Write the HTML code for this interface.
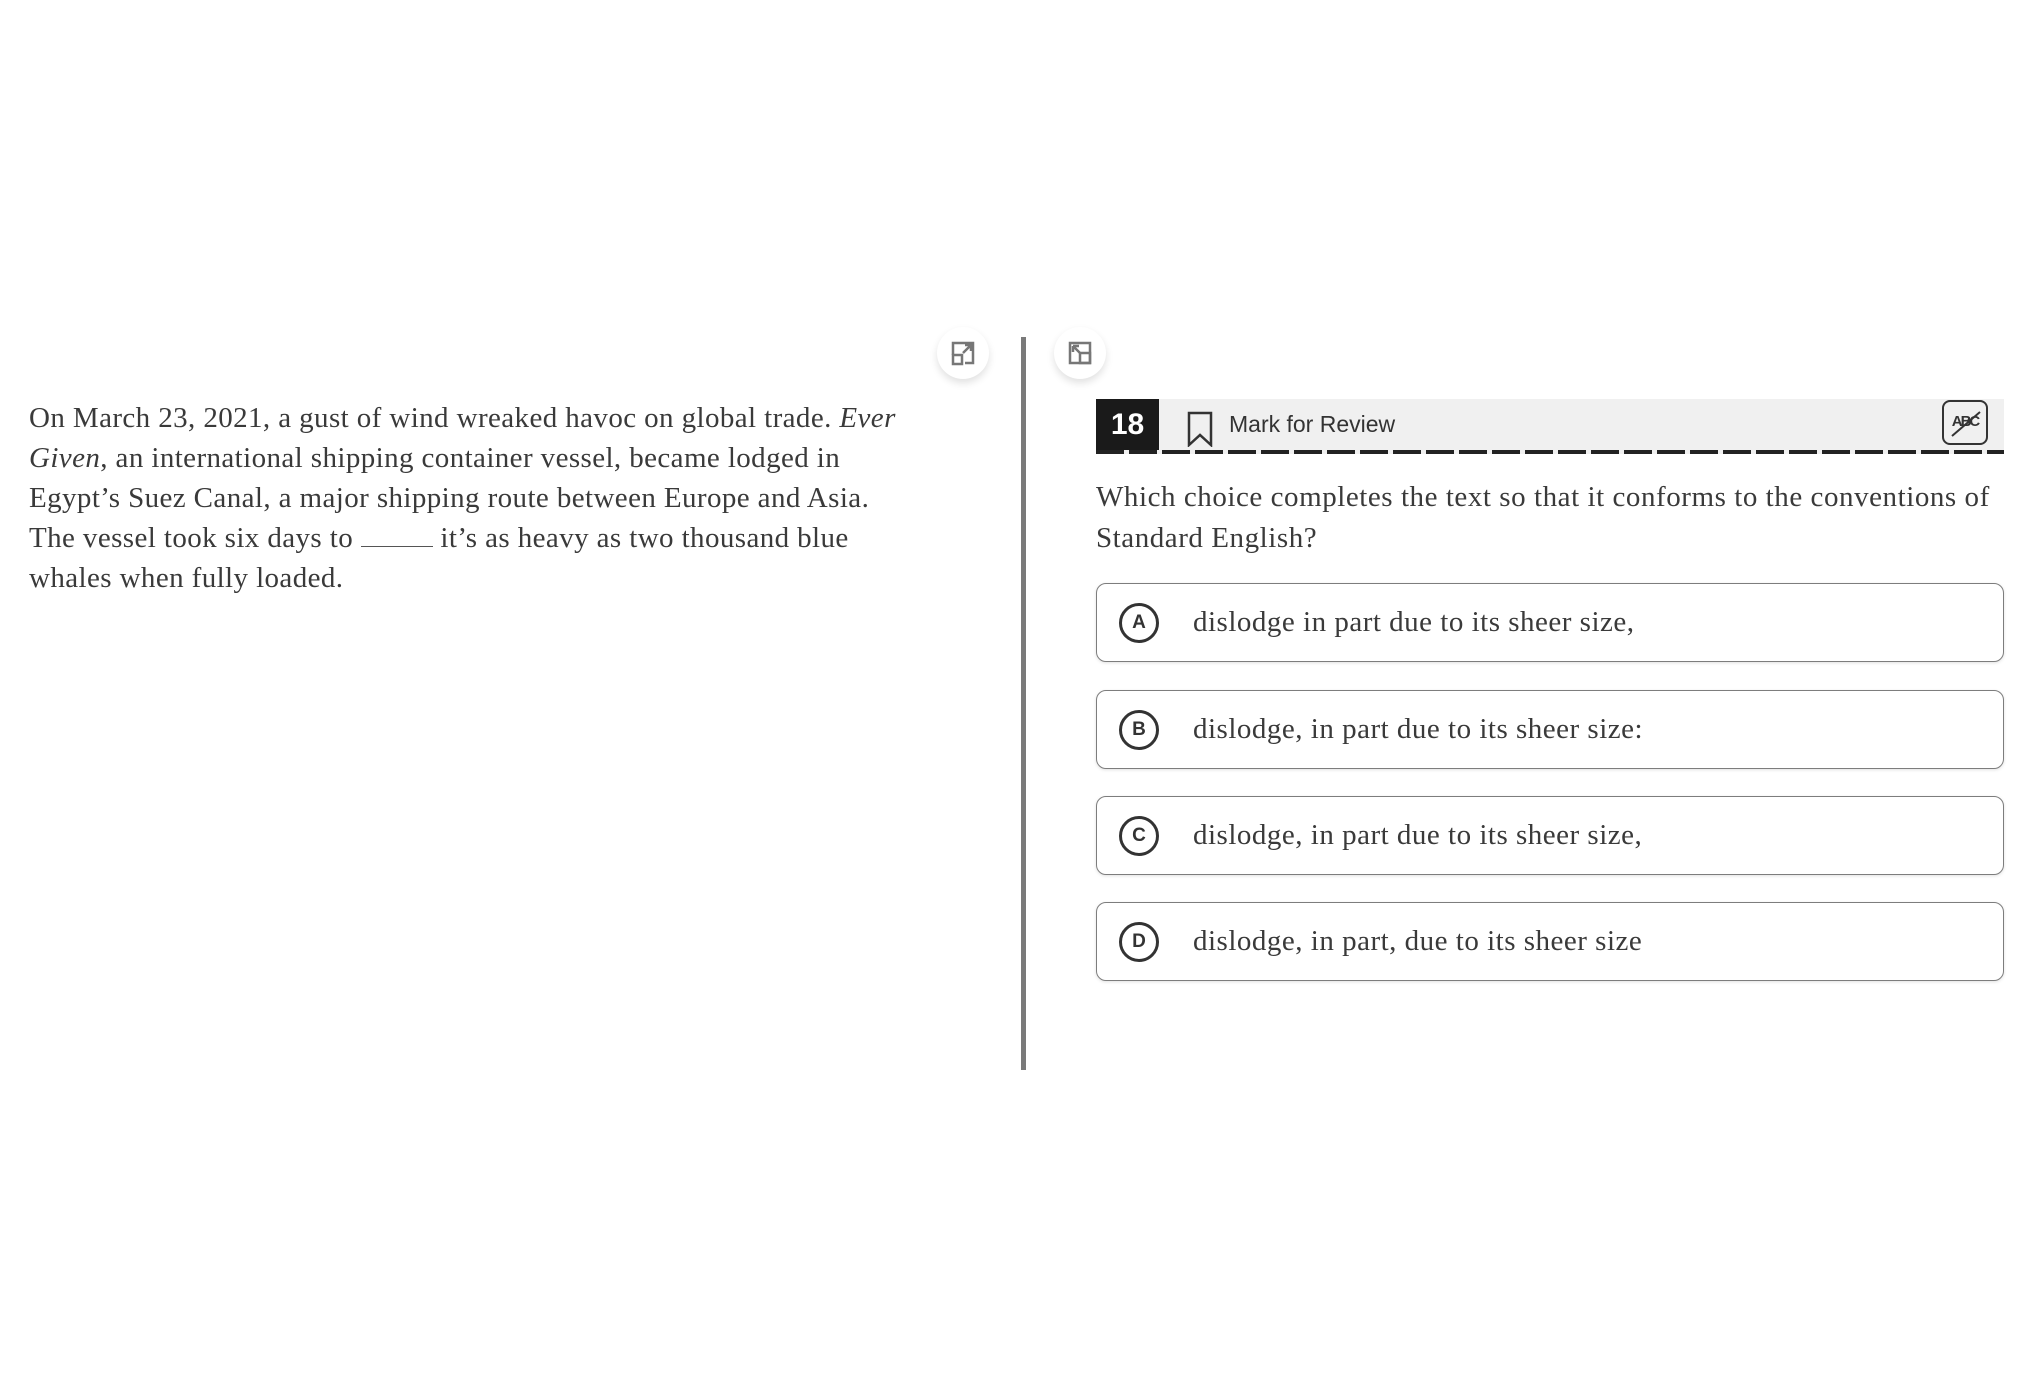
<!DOCTYPE html>
<html><head><meta charset="utf-8"><style>
*{margin:0;padding:0;box-sizing:border-box}
body{width:2040px;height:1400px;background:#fff;position:relative;overflow:hidden;font-family:"Liberation Serif",serif;color:#3a3a3a}
.passage{position:absolute;left:29px;top:398px;width:990px;font-size:29px;line-height:40px;letter-spacing:0.4px;white-space:nowrap}
.blank{display:inline-block;width:72px;border-bottom:1.5px solid #555;height:24px;vertical-align:baseline}
.div{position:absolute;left:1021px;top:337px;width:5px;height:733px;background:#7a7a7a}
.ic{position:absolute;width:52px;height:52px;border-radius:50%;background:#fff;box-shadow:0 4px 8px rgba(0,0,0,.12)}
.bar{position:absolute;left:1096px;top:399px;width:908px;height:55px;background:#f0f0f0}
.num{position:absolute;left:0;top:0;width:63px;height:51px;background:#1a1a1a;color:#fff;font-family:"Liberation Sans",sans-serif;font-weight:bold;font-size:30px;text-align:center;line-height:51px}
.dash{position:absolute;left:0;bottom:0;width:908px;height:4px;background:repeating-linear-gradient(90deg,#222 0 28px,transparent 28px 33px)}
.mark{position:absolute;left:133px;top:12px;font-family:"Liberation Sans",sans-serif;font-size:23px;color:#333}
.q{position:absolute;left:1096px;top:477px;width:930px;font-size:29px;line-height:41px;letter-spacing:0.55px;white-space:nowrap}
.ch{position:absolute;left:1096px;width:908px;height:79px;border:1.5px solid #7d7d7d;border-radius:10px;box-shadow:0 1px 3px rgba(0,0,0,.12)}
.ch .c{position:absolute;left:22px;top:19px;width:40px;height:40px;border:3px solid #333;border-radius:50%;font-family:"Liberation Sans",sans-serif;font-weight:bold;font-size:19px;text-align:center;line-height:34px;color:#333}
.ch .t{position:absolute;left:96px;top:19px;font-size:29px;line-height:38px;letter-spacing:0.5px;white-space:nowrap}
</style></head><body>
<div class="passage">On March 23, 2021, a gust of wind wreaked havoc on global trade. <i>Ever</i><br><i>Given</i>, an international shipping container vessel, became lodged in<br>Egypt’s Suez Canal, a major shipping route between Europe and Asia.<br>The vessel took six days to <span class="blank"></span> it’s as heavy as two thousand blue<br>whales when fully loaded.</div>
<div class="ic" style="left:937px;top:327px"><svg width="52" height="52" viewBox="0 0 52 52" fill="none" stroke="#777" stroke-width="2.5"><path d="M16 28V16h20v20H28"/><rect x="16" y="28" width="9" height="9"/><path d="M26 26l8-8M28 18h6v6"/></svg></div>
<div class="div"></div>
<div class="ic" style="left:1054px;top:327px"><svg width="52" height="52" viewBox="0 0 52 52" fill="none" stroke="#777" stroke-width="2.5"><path d="M16 36V16h20v20z"/><rect x="26" y="26" width="10" height="10"/><path d="M19 19l7 7M19 19v6M19 19h6"/></svg></div>
<div class="bar"><div class="num">18</div>
<svg style="position:absolute;left:90px;top:12px" width="30" height="36" viewBox="0 0 30 36" fill="none" stroke="#333" stroke-width="2.5"><path d="M3 2h22v32l-11-10-11 10z"/></svg>
<div class="mark">Mark for Review</div>
<div style="position:absolute;left:846px;top:1px;width:46px;height:45px;border:2.5px solid #333;border-radius:8px;font-family:'Liberation Sans',sans-serif;font-weight:bold;font-size:15px;text-align:center;line-height:40px;color:#333;letter-spacing:-2px">ABC<svg style="position:absolute;left:6px;top:8px" width="32" height="28"><path d="M2 26L30 2" stroke="#333" stroke-width="2"/></svg></div>
<div class="dash"></div></div>
<div class="q">Which choice completes the text so that it conforms to the conventions of<br>Standard English?</div>
<div class="ch" style="top:583px"><div class="c">A</div><div class="t">dislodge in part due to its sheer size,</div></div>
<div class="ch" style="top:690px"><div class="c">B</div><div class="t">dislodge, in part due to its sheer size:</div></div>
<div class="ch" style="top:796px"><div class="c">C</div><div class="t">dislodge, in part due to its sheer size,</div></div>
<div class="ch" style="top:902px"><div class="c">D</div><div class="t">dislodge, in part, due to its sheer size</div></div>
</body></html>
